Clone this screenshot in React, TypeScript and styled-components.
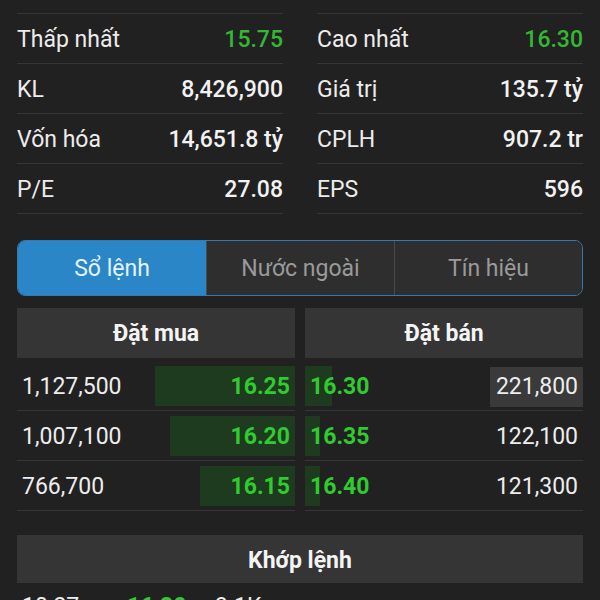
import React from "react";
import styled, { createGlobalStyle } from "styled-components";

const GlobalStyle = createGlobalStyle`
  body {
    margin: 0;
    background: #212121;
    font-family: Roboto, "Noto Sans", sans-serif;
    color: #f0f0f0;
  }
`;

const Screen = styled.div`
  width: 600px;
  height: 600px;
  overflow: hidden;
`;

const Content = styled.div`
  margin-top: -36px;
  padding: 0 17px 0 17px;
`;

const StatsGrid = styled.div`
  display: grid;
  grid-template-columns: 1fr 1fr;
  column-gap: 34px;
`;

const StatRow = styled.div`
  box-sizing: border-box;
  height: 50px;
  padding-top: 2px;
  border-bottom: 1px solid #363636;
  display: flex;
  align-items: center;
  justify-content: space-between;
  font-size: 23px;
`;

const StatLabel = styled.span`
  color: #ececec;
`;

const StatValue = styled.span<{ $green?: boolean }>`
  font-weight: 500;
  color: ${(p) => (p.$green ? "#34b834" : "#f2f2f2")};
`;

const Tabs = styled.div`
  margin-top: 26px;
  height: 54px;
  border: 1px solid #3779aa;
  border-radius: 8px;
  overflow: hidden;
  display: grid;
  grid-template-columns: 188px 1fr 1fr;
`;

const Tab = styled.div<{ $active?: boolean }>`
  display: flex;
  align-items: center;
  justify-content: center;
  font-size: 23px;
  background: ${(p) => (p.$active ? "#2a86c6" : "#2e2e2e")};
  color: ${(p) => (p.$active ? "#e2f4ff" : "#9a9a9a")};
  & + & {
    border-left: 1px solid #4a4a4a;
  }
`;

const Book = styled.div`
  margin-top: 12px;
  display: grid;
  grid-template-columns: 278px 278px;
  column-gap: 10px;
`;

const BookHeader = styled.div`
  height: 50px;
  margin-bottom: 3px;
  background: #353535;
  display: flex;
  align-items: center;
  justify-content: center;
  font-size: 23px;
  font-weight: 700;
  color: #f4f4f4;
`;

const OrderRow = styled.div<{ $side: "bid" | "ask" }>`
  box-sizing: border-box;
  height: 50px;
  border-bottom: 1px solid #363636;
  display: flex;
  align-items: center;
  justify-content: space-between;
  font-size: 23px;
  padding: ${(p) => (p.$side === "bid" ? "2px 5px 0 5px" : "2px 0 0 5px")};
  background-image: linear-gradient(#1e3a1f, #1e3a1f);
  background-repeat: no-repeat;
  background-position: ${(p) => (p.$side === "bid" ? "right 5px" : "left 5px")};
`;

const Qty = styled.span<{ $highlight?: boolean }>`
  height: 40px;
  display: flex;
  align-items: center;
  padding: 0 5px 0 6px;
  margin-left: ${(p) => (p.$highlight ? "0" : "-6px")};
  background: ${(p) => (p.$highlight ? "#3a3a3a" : "transparent")};
  color: #ededed;
`;

const Price = styled.span`
  font-weight: 700;
  color: #2fcb2f;
`;

const MatchHeader = styled.div`
  margin-top: 24px;
  height: 48px;
  padding-top: 2px;
  box-sizing: border-box;
  background: #353535;
  display: flex;
  align-items: center;
  justify-content: center;
  font-size: 23px;
  font-weight: 700;
  color: #f4f4f4;
`;

const MatchRow = styled.div`
  display: grid;
  grid-template-columns: 105px 88px auto;
  padding: 10px 5px 0;
  font-size: 23px;
  color: #ededed;
`;

const stats: [string, string, boolean][][] = [
  [
    ["Tham chiếu", "16.00", false],
    ["Mở cửa", "16.00", false],
  ],
  [
    ["Thấp nhất", "15.75", true],
    ["Cao nhất", "16.30", true],
  ],
  [
    ["KL", "8,426,900", false],
    ["Giá trị", "135.7 tỷ", false],
  ],
  [
    ["Vốn hóa", "14,651.8 tỷ", false],
    ["CPLH", "907.2 tr", false],
  ],
  [
    ["P/E", "27.08", false],
    ["EPS", "596", false],
  ],
];

const bids = [
  { qty: "1,127,500", price: "16.25", depth: 140 },
  { qty: "1,007,100", price: "16.20", depth: 125 },
  { qty: "766,700", price: "16.15", depth: 95 },
];

const asks = [
  { qty: "221,800", price: "16.30", depth: 27, highlight: true },
  { qty: "122,100", price: "16.35", depth: 15 },
  { qty: "121,300", price: "16.40", depth: 15 },
];

const App = () => {
  return (
    <Screen>
      <GlobalStyle />
      <Content>
        <StatsGrid>
          {stats.flat().map(([label, value, green]) => (
            <StatRow key={label}>
              <StatLabel>{label}</StatLabel>
              <StatValue $green={green}>{value}</StatValue>
            </StatRow>
          ))}
        </StatsGrid>

        <Tabs>
          <Tab $active>Sổ lệnh</Tab>
          <Tab>Nước ngoài</Tab>
          <Tab>Tín hiệu</Tab>
        </Tabs>

        <Book>
          <div>
            <BookHeader>Đặt mua</BookHeader>
            {bids.map((b) => (
              <OrderRow key={b.price} $side="bid" style={{ backgroundSize: `${b.depth}px 40px` }}>
                <Qty>{b.qty}</Qty>
                <Price>{b.price}</Price>
              </OrderRow>
            ))}
          </div>
          <div>
            <BookHeader>Đặt bán</BookHeader>
            {asks.map((a) => (
              <OrderRow key={a.price} $side="ask" style={{ backgroundSize: `${a.depth}px 40px` }}>
                <Price>{a.price}</Price>
                <Qty $highlight={a.highlight}>{a.qty}</Qty>
              </OrderRow>
            ))}
          </div>
        </Book>

        <MatchHeader>Khớp lệnh</MatchHeader>
        <MatchRow>
          <span>10:27</span>
          <Price>16.30</Price>
          <span>3.1K</span>
        </MatchRow>
      </Content>
    </Screen>
  );
};

export default App;
